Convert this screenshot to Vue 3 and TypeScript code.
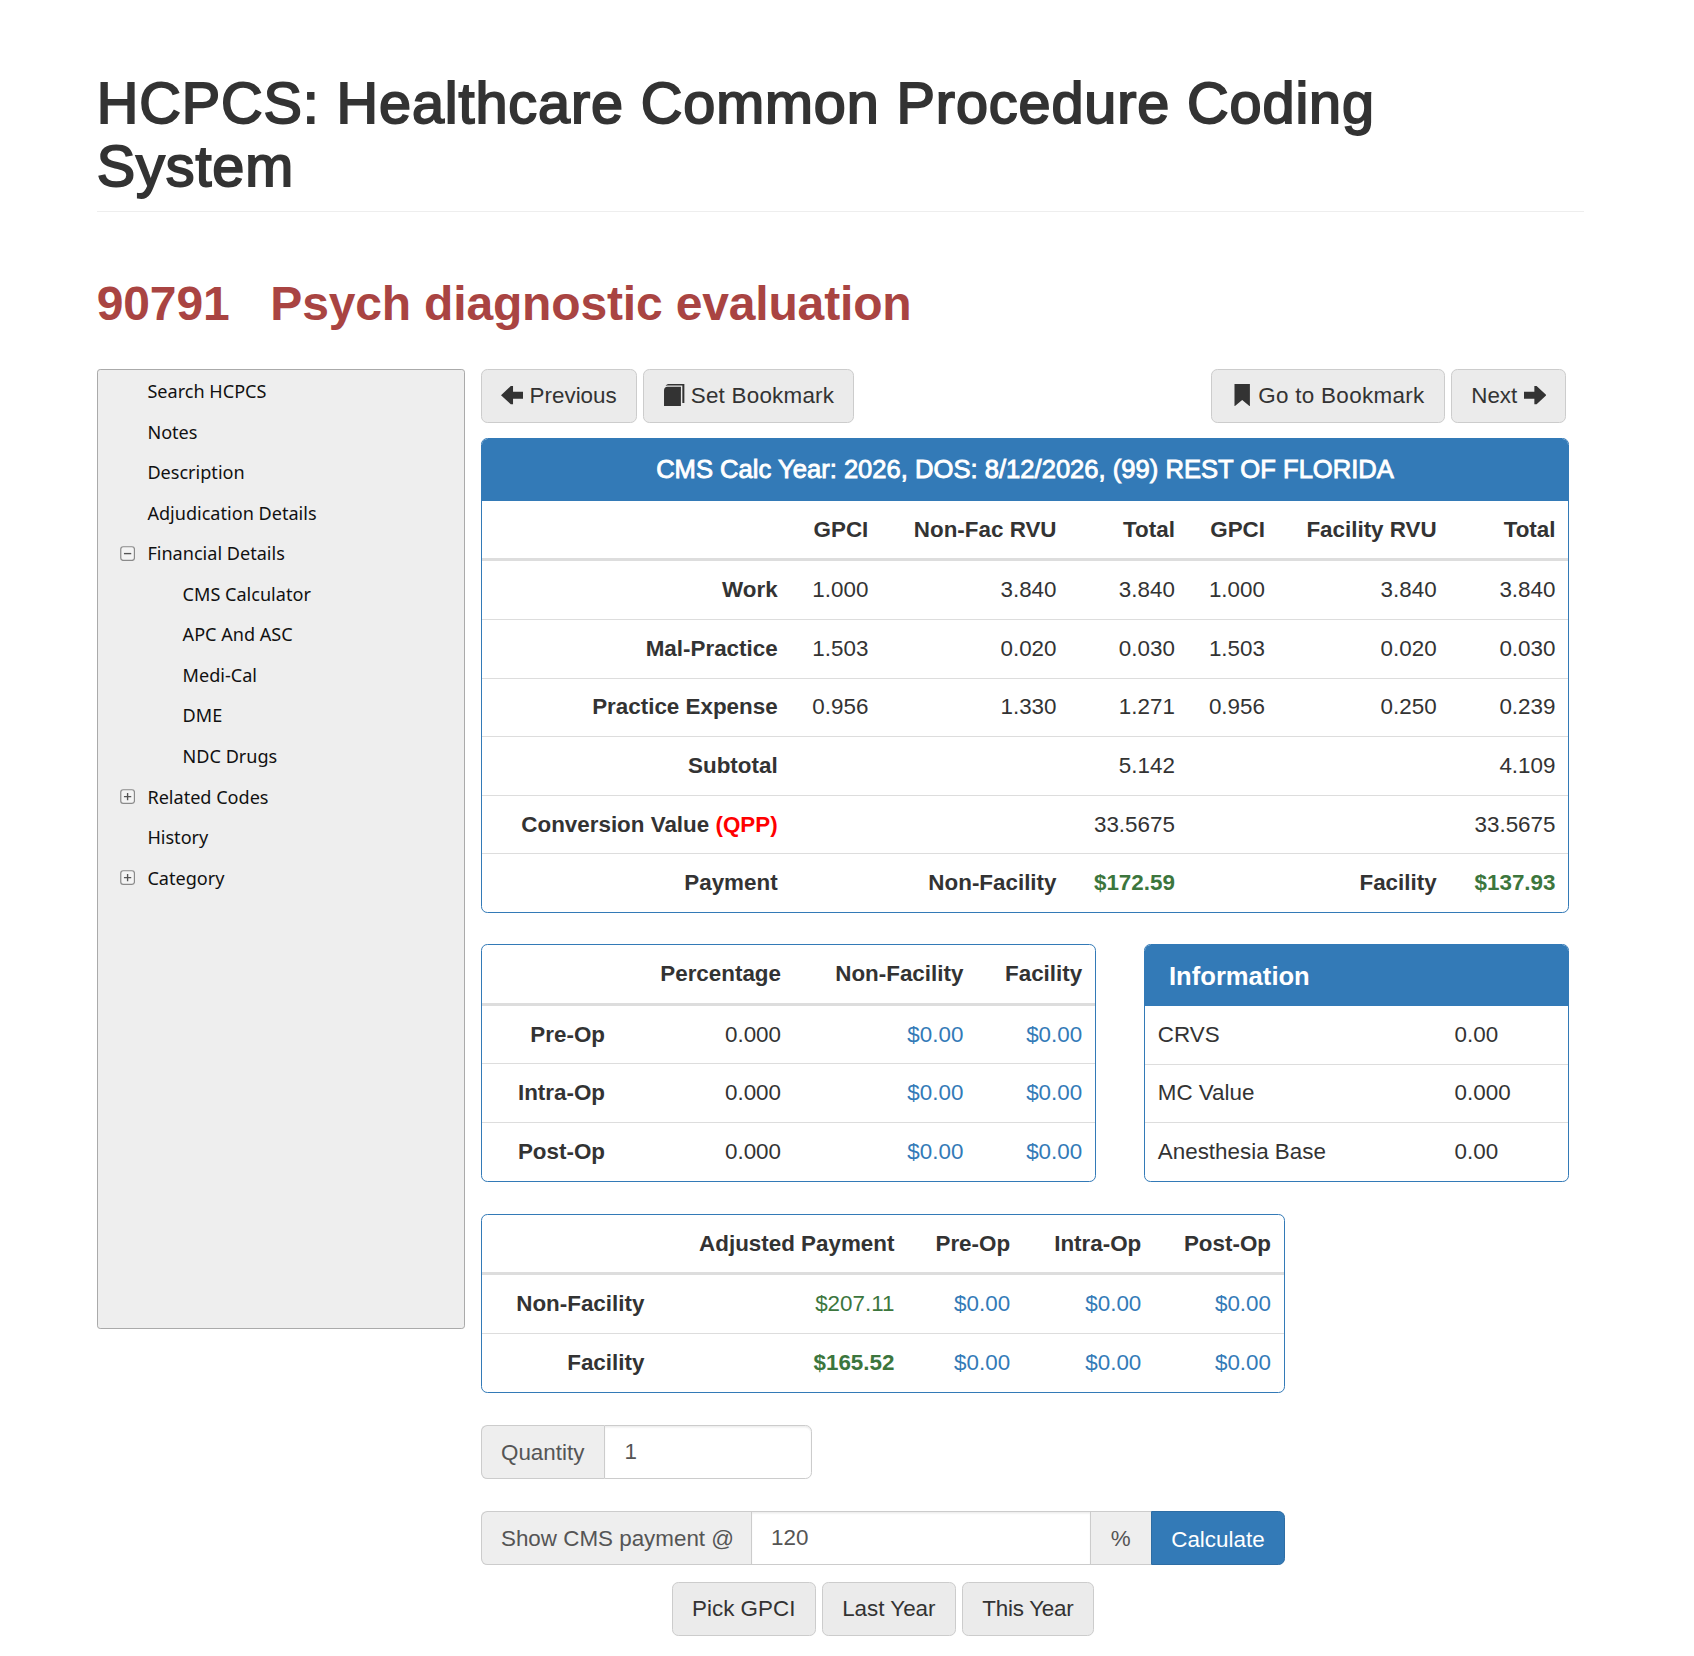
<script setup lang="ts">
interface NavItem { label: string; level: number; toggle?: 'plus' | 'minus' }
const nav: NavItem[] = [
  { label: 'Search HCPCS', level: 0 },
  { label: 'Notes', level: 0 },
  { label: 'Description', level: 0 },
  { label: 'Adjudication Details', level: 0 },
  { label: 'Financial Details', level: 0, toggle: 'minus' },
  { label: 'CMS Calculator', level: 1 },
  { label: 'APC And ASC', level: 1 },
  { label: 'Medi-Cal', level: 1 },
  { label: 'DME', level: 1 },
  { label: 'NDC Drugs', level: 1 },
  { label: 'Related Codes', level: 0, toggle: 'plus' },
  { label: 'History', level: 0 },
  { label: 'Category', level: 0, toggle: 'plus' },
]
const rvu = [
  ['Work', '1.000', '3.840', '3.840', '1.000', '3.840', '3.840'],
  ['Mal-Practice', '1.503', '0.020', '0.030', '1.503', '0.020', '0.030'],
  ['Practice Expense', '0.956', '1.330', '1.271', '0.956', '0.250', '0.239'],
  ['Subtotal', '', '', '5.142', '', '', '4.109'],
]
const ops = ['Pre-Op', 'Intra-Op', 'Post-Op']
const info = [['CRVS', '0.00'], ['MC Value', '0.000'], ['Anesthesia Base', '0.00']]
</script>

<template>
  <div class="page">
    <div class="page-header"><h1>HCPCS: Healthcare Common Procedure Coding System</h1></div>
    <h2><span class="code">90791</span>Psych diagnostic evaluation</h2>
    <div class="layout">
      <aside class="tree">
        <div v-for="n in nav" :key="n.label" class="node" :class="'lvl' + n.level">
          <svg v-if="n.toggle" class="toggle" viewBox="0 0 10 10">
            <rect x="0.5" y="0.5" width="9" height="9" rx="1.6" fill="#f4f4f4" stroke="#8a8a8a" stroke-width="0.8" />
            <path v-if="n.toggle === 'minus'" d="M2.6 5h4.8" stroke="#555" stroke-width="0.9" />
            <path v-else d="M2.6 5h4.8M5 2.6v4.8" stroke="#555" stroke-width="0.9" />
          </svg>
          <span>{{ n.label }}</span>
        </div>
      </aside>
      <main class="main">
        <div class="toolbar">
          <div class="btn-row">
            <button class="btn"><svg class="gi" viewBox="0 0 16 14"><path d="M0 7 7 .5h1.6v4H16v5H8.6v4H7z" /></svg> Previous</button>
            <button class="btn mark"><svg class="gi" viewBox="0 0 20 22"><path d="M0 6.2C0 3.8 1.4 2.6 3.2 2.6H16.6V22H0z" /><path d="M1.6 1.6C2.4.6 3.4 0 5 0h15v18.6h-2V1.4H5c-1.200 0-2.200.200-3.400.200z" /></svg> Set Bookmark</button>
          </div>
          <div class="btn-row">
            <button class="btn mark wide"><svg class="gi" viewBox="0 0 16 16"><path d="M2.500 0h11v16L8 11.400 2.500 16z" /></svg> Go to Bookmark</button>
            <button class="btn">Next <svg class="gi" viewBox="0 0 16 14"><path d="M16 7 9 .5H7.400v4H0v5h7.400v4H9z" /></svg></button>
          </div>
        </div>

        <section class="panel first">
          <div class="panel-heading center">CMS Calc Year: 2026, DOS: 8/12/2026, (99) REST OF FLORIDA</div>
          <table>
            <colgroup><col style="width:192.9px"><col style="width:56.7px"><col style="width:117.6px"><col style="width:74px"><col style="width:56.3px"><col style="width:107.300px"><col></colgroup>
            <thead><tr><th></th><th>GPCI</th><th>Non-Fac RVU</th><th>Total</th><th>GPCI</th><th>Facility RVU</th><th>Total</th></tr></thead>
            <tbody>
              <tr v-for="r in rvu" :key="r[0]">
                <th>{{ r[0] }}</th><td v-for="(c, i) in r.slice(1)" :key="i">{{ c }}</td>
              </tr>
              <tr><th>Conversion Value <span class="red">(QPP)</span></th><td></td><td></td><td>33.5675</td><td></td><td></td><td>33.5675</td></tr>
              <tr><th>Payment</th><td></td><th>Non-Facility</th><td class="green b">$172.59</td><td></td><th>Facility</th><td class="green b">$137.93</td></tr>
            </tbody>
          </table>
        </section>

        <div class="two-col">
          <section class="panel ops">
            <table>
              <colgroup><col style="width:85px"><col style="width:110px"><col style="width:114px"><col></colgroup>
              <thead><tr><th></th><th>Percentage</th><th>Non-Facility</th><th>Facility</th></tr></thead>
              <tbody>
                <tr v-for="o in ops" :key="o"><th>{{ o }}</th><td>0.000</td><td class="blue">$0.00</td><td class="blue">$0.00</td></tr>
              </tbody>
            </table>
          </section>
          <section class="panel info">
            <div class="panel-heading strong">Information</div>
            <table class="left">
              <colgroup><col style="width:185.500px"><col></colgroup>
              <tbody>
                <tr v-for="r in info" :key="r[0]"><td>{{ r[0] }}</td><td>{{ r[1] }}</td></tr>
              </tbody>
            </table>
          </section>
        </div>

        <section class="panel adjusted">
          <table>
            <colgroup><col style="width:109.600px"><col style="width:156.300px"><col style="width:72.300px"><col style="width:82px"><col></colgroup>
            <thead><tr><th></th><th>Adjusted Payment</th><th>Pre-Op</th><th>Intra-Op</th><th>Post-Op</th></tr></thead>
            <tbody>
              <tr><th>Non-Facility</th><td class="green">$207.11</td><td class="blue">$0.00</td><td class="blue">$0.00</td><td class="blue">$0.00</td></tr>
              <tr><th>Facility</th><td class="green b">$165.52</td><td class="blue">$0.00</td><td class="blue">$0.00</td><td class="blue">$0.00</td></tr>
            </tbody>
          </table>
        </section>

        <div class="input-group qty">
          <span class="addon">Quantity</span>
          <input class="field" value="1" />
        </div>
        <div class="input-group calc">
          <span class="addon">Show CMS payment @</span>
          <input class="field" value="120" />
          <span class="addon pct">%</span>
          <button class="btn-primary">Calculate</button>
        </div>
        <div class="btn-row gpci">
          <button class="btn">Pick GPCI</button>
          <button class="btn">Last Year</button>
          <button class="btn tight">This Year</button>
        </div>
      </main>
    </div>
  </div>
</template>

<style>
html, body { margin: 0; background: #fff; }
</style>

<style scoped>
.page {
  zoom: 1.6;
  box-sizing: border-box;
  width: 1058px;
  height: 1035px;
  padding: 45px 0 0 60.5px;
  font-family: "Liberation Sans", Arial, sans-serif;
  font-size: 14px;
  line-height: 20px;
  color: #333;
}
.page-header { width: 929.6px; padding-bottom: 7.5px; border-bottom: 1px solid #eee; }
h1 {
  margin: 0;
  width: 880px;
  font-size: 36px;
  line-height: 39.6px;
  font-weight: 400;
  letter-spacing: 0.55px;
  -webkit-text-stroke: 1.2px #333;
}
h2 {
  margin: 41.5px 0 24px;
  font-size: 30px;
  line-height: 33px;
  font-weight: 700;
  letter-spacing: -0.1px;
  color: #a94442;
}
.code { margin-right: 25.5px; }
.layout { display: flex; align-items: flex-start; gap: 10px; }
.tree {
  box-sizing: border-box;
  width: 230px;
  height: 600px;
  flex: none;
  background: #eee;
  border: 1px solid #aaa;
  border-radius: 2px;
  padding-top: 0.5px;
  font-family: "Noto Sans", sans-serif;
  font-size: 11.3px;
  color: #111;
}
.node { position: relative; height: 25.35px; line-height: 25.35px; white-space: nowrap; }
.lvl0 { padding-left: 31px; }
.lvl1 { padding-left: 53px; }
.toggle { position: absolute; left: 14px; top: 8px; width: 9.5px; height: 9.5px; }
.main { width: 680.3px; flex: none; }
.toolbar { display: flex; justify-content: space-between; padding-right: 2px; margin-bottom: 9.5px; }
.btn-row { display: flex; gap: 4px; }
.btn {
  box-sizing: border-box;
  height: 33.5px;
  padding: 6px 12px;
  font: inherit;
  color: #333;
  background: #ebebeb;
  border: 1px solid #ccc;
  border-radius: 4px;
  white-space: nowrap;
}
.mark { letter-spacing: 0.15px; }
.wide { letter-spacing: 0.2px; }
.mark .gi { margin-right: -1px; }
.tight { letter-spacing: -0.15px; }
.gi { height: 14px; width: 14px; fill: #333; vertical-align: -2px; }
.panel {
  box-sizing: border-box;
  border: 1px solid #337ab7;
  border-radius: 4px;
  margin-bottom: 20px;
  overflow: hidden;
  background: #fff;
}
.first { margin-bottom: 19.5px; }
.two-col .panel { margin-bottom: 20px; }
.panel-heading {
  padding: 10px 15px;
  background: #337ab7;
  color: #fff;
  font-size: 16px;
  line-height: 17.6px;
  height: 18.6px;
  -webkit-text-stroke: 0.55px #fff;
}
.strong { font-weight: 700; -webkit-text-stroke: 0; padding: 10.5px 15px 9.5px; height: 18px; }
.center { text-align: center; }
table { width: 100%; border-collapse: collapse; table-layout: fixed; }
th, td { padding: 8px; text-align: right; border-top: 1px solid #ddd; font-weight: 400; white-space: nowrap; }
th { font-weight: 700; }
thead th { border-top: 0; border-bottom: 2px solid #ddd; }
tbody tr:first-child th, tbody tr:first-child td { border-top: 0; }
.left td { text-align: left; }
.red { color: #f00; }
.green { color: #3c763d; }
.blue { color: #337ab7; }
.b { font-weight: 700; }
.two-col { display: flex; justify-content: space-between; align-items: stretch; }
.ops { width: 384.5px; }
.info { width: 265.8px; }
.adjusted { width: 502.5px; }
.input-group { display: flex; box-sizing: border-box; height: 34px; }
.qty { width: 207.2px; margin-bottom: 20px; }
.calc { width: 502.5px; margin-bottom: 10.5px; }
.addon {
  box-sizing: border-box;
  padding: 7px 12px 5px;
  background: #eee;
  border: 1px solid #ccc;
  color: #555;
  white-space: nowrap;
}
.qty .addon { padding-right: 12.5px; }
.addon:first-child { border-radius: 4px 0 0 4px; border-right: 0; }
.calc .addon:first-child { padding-right: 10.5px; }
.pct { border-right: 0; border-left: 0; padding-left: 12.7px; padding-right: 12.7px; }
.field {
  box-sizing: border-box;
  flex: 1;
  min-width: 0;
  height: 34px;
  padding: 6px 12px;
  border: 1px solid #ccc;
  border-radius: 0;
  font: inherit;
  color: #555;
  outline: none;
  box-shadow: inset 0 1px 1px rgba(0, 0, 0, .075);
}
.qty .field { border-radius: 0 4px 4px 0; }
.btn-primary {
  box-sizing: border-box;
  padding: 7px 12px 5px;
  font: inherit;
  color: #fff;
  background: #337ab7;
  border: 1px solid #2e6da4;
  border-radius: 0 4px 4px 0;
}
.gpci { width: 502.5px; justify-content: center; box-sizing: border-box; }
</style>
